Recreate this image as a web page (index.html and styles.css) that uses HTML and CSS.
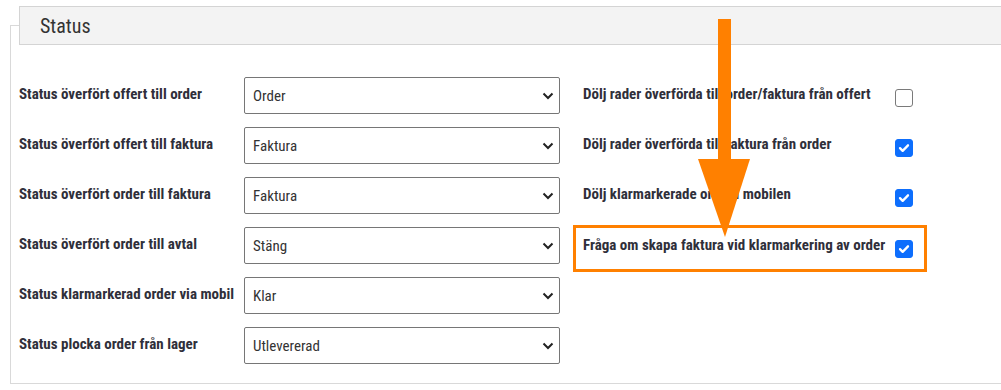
FILE: index.html
```html
<!DOCTYPE html>
<html lang="sv">
<head>
    <meta charset="UTF-8">
    <meta name="viewport" content="width=device-width, initial-scale=1.0">
    <title>Status</title>
    <link rel="stylesheet" href="styles.css">
</head>
<body>
    <div class="panel">
        <div class="panel-head">Status</div>
        <div class="panel-body">
            <div class="col-left">
                <div class="row">
                    <label class="lbl">Status överfört offert till order</label>
                    <div class="select"><span>Order</span><svg class="chev" viewBox="0 0 12 8"><path d="M1.5 1.5 6 6l4.5-4.5"/></svg></div>
                </div>
                <div class="row">
                    <label class="lbl">Status överfört offert till faktura</label>
                    <div class="select"><span>Faktura</span><svg class="chev" viewBox="0 0 12 8"><path d="M1.5 1.5 6 6l4.5-4.5"/></svg></div>
                </div>
                <div class="row">
                    <label class="lbl">Status överfört order till faktura</label>
                    <div class="select"><span>Faktura</span><svg class="chev" viewBox="0 0 12 8"><path d="M1.5 1.5 6 6l4.5-4.5"/></svg></div>
                </div>
                <div class="row">
                    <label class="lbl">Status överfört order till avtal</label>
                    <div class="select"><span>Stäng</span><svg class="chev" viewBox="0 0 12 8"><path d="M1.5 1.5 6 6l4.5-4.5"/></svg></div>
                </div>
                <div class="row">
                    <label class="lbl">Status klarmarkerad order via mobil</label>
                    <div class="select"><span>Klar</span><svg class="chev" viewBox="0 0 12 8"><path d="M1.5 1.5 6 6l4.5-4.5"/></svg></div>
                </div>
                <div class="row">
                    <label class="lbl">Status plocka order från lager</label>
                    <div class="select"><span>Utlevererad</span><svg class="chev" viewBox="0 0 12 8"><path d="M1.5 1.5 6 6l4.5-4.5"/></svg></div>
                </div>
            </div>
            <div class="col-right">
                <div class="row check-row">
                    <label class="lbl">Dölj rader överförda till order/faktura från offert</label>
                    <span class="box"></span>
                </div>
                <div class="row check-row">
                    <label class="lbl">Dölj rader överförda till faktura från order</label>
                    <span class="box checked"><svg viewBox="0 0 18 18"><path d="M4.5 9.2l3 3 6-6.2"/></svg></span>
                </div>
                <div class="row check-row">
                    <label class="lbl">Dölj klarmarkerade order i mobilen</label>
                    <span class="box checked"><svg viewBox="0 0 18 18"><path d="M4.5 9.2l3 3 6-6.2"/></svg></span>
                </div>
                <div class="row check-row highlight">
                    <label class="lbl">Fråga om skapa faktura vid klarmarkering av order</label>
                    <span class="box checked"><svg viewBox="0 0 18 18"><path d="M4.5 9.2l3 3 6-6.2"/></svg></span>
                </div>
            </div>
        </div>
    </div>

    <!-- annotation arrow drawn over the form -->
    <svg class="arrow" viewBox="0 0 54 220">
        <rect x="20" y="0" width="13" height="142"/>
        <polygon points="0,140 52,140 27,218"/>
    </svg>
</body>
</html>
```
FILE: styles.css
```css
body {
    margin: 0;
    font-family: Roboto, "Liberation Sans", sans-serif;
    font-stretch: 87.5%;
    color: #2f2f3a;
    background: #fff;
}

.panel {
    margin: 25px 0 0 10px;
    height: 357px;
    border: 1px solid #d9d9d9;
    border-right: 0;
}

.panel-head {
    margin: -20px 0 0 8px;
    height: 37px;
    padding-left: 20px;
    display: flex;
    align-items: center;
    background-color: #f3f3f3;
    border: 1px solid #d4d4d4;
    border-right: 0;
    font-size: 20px;
    color: #333;
}

.panel-body {
    display: flex;
    gap: 23px;
    padding: 32px 0 0 8px;
}

.col-left,
.col-right {
    display: flex;
    flex-direction: column;
    gap: 13px;
}

.col-right {
    width: 330px;
}

.row {
    display: flex;
    align-items: center;
    height: 37px;
}

.lbl {
    font-weight: 700;
    font-size: 15px;
    padding-bottom: 3px;
}

.col-left .lbl {
    width: 225px;
}

.select {
    width: 316px;
    height: 37px;
    box-sizing: border-box;
    border: 1px solid #767676;
    border-radius: 2px;
    display: flex;
    align-items: center;
    justify-content: space-between;
    padding: 0 5px 0 8px;
    font-size: 15px;
    color: #333;
}

.chev {
    width: 12px;
    height: 8px;
    fill: none;
    stroke: #222;
    stroke-width: 2;
}

.check-row {
    justify-content: space-between;
}

.box {
    width: 18px;
    height: 18px;
    box-sizing: border-box;
    border: 1px solid #7a7a7a;
    border-radius: 3px;
    margin-top: 4px;
    flex-shrink: 0;
}

.box.checked {
    background-color: #0d6efd;
    border-color: #0d6efd;
}

.box svg {
    display: block;
    width: 16px;
    height: 16px;
    fill: none;
    stroke: #fff;
    stroke-width: 2.6;
    stroke-linecap: round;
    stroke-linejoin: round;
}

.highlight {
    margin: -2px -14px -7px -10px;
    padding: 0 11px 4px 7px;
    border: 3px solid #ff8000;
}

.arrow {
    position: absolute;
    left: 698px;
    top: 19px;
    width: 54px;
    height: 220px;
    fill: #ff8000;
}
```
